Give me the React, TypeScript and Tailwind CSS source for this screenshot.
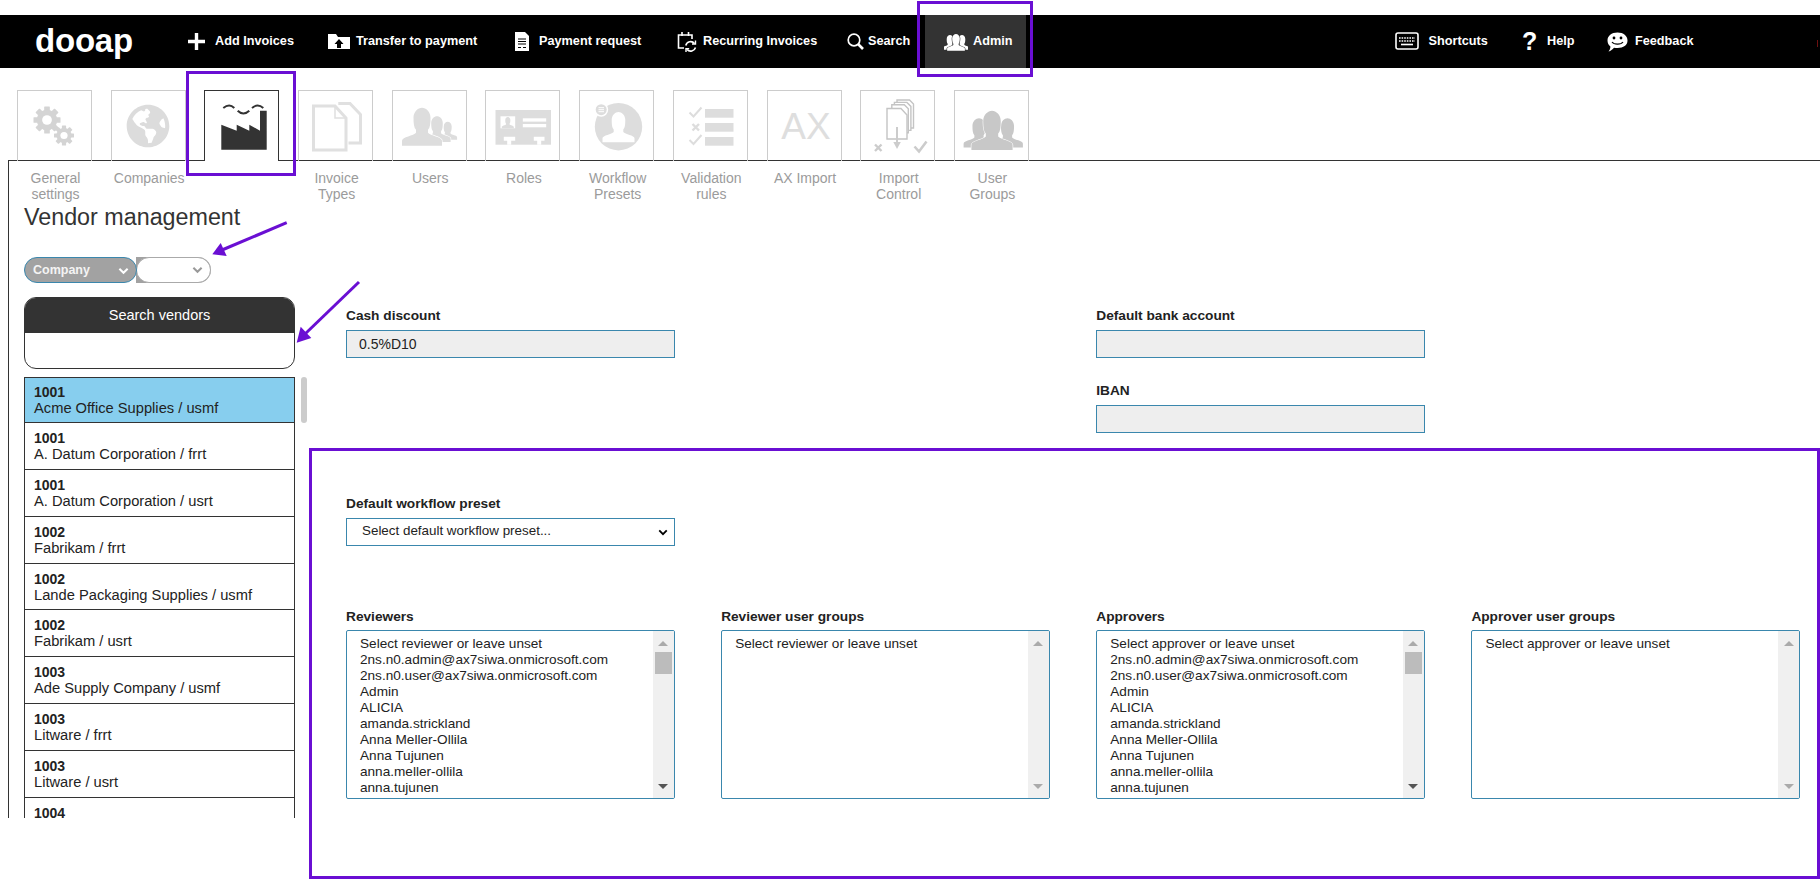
import React from 'react';
import { FaGlobeAmericas } from 'react-icons/fa';

const purple = '#6a0fd3';

const vendors = [
  ['1001', 'Acme Office Supplies / usmf'],
  ['1001', 'A. Datum Corporation / frrt'],
  ['1001', 'A. Datum Corporation / usrt'],
  ['1002', 'Fabrikam / frrt'],
  ['1002', 'Lande Packaging Supplies / usmf'],
  ['1002', 'Fabrikam / usrt'],
  ['1003', 'Ade Supply Company / usmf'],
  ['1003', 'Litware / frrt'],
  ['1003', 'Litware / usrt'],
  ['1004', ''],
];

const users = (first: string) => [
  first,
  '2ns.n0.admin@ax7siwa.onmicrosoft.com',
  '2ns.n0.user@ax7siwa.onmicrosoft.com',
  'Admin',
  'ALICIA',
  'amanda.strickland',
  'Anna Meller-Ollila',
  'Anna Tujunen',
  'anna.meller-ollila',
  'anna.tujunen',
];

const PERSON =
  'M-20 0V-5C-20 -9 -8 -10 -6 -13V-16C-8 -18 -8.5 -22 -8.5 -28C-8.5 -34 -4 -38 0 -38C4 -38 8.5 -34 8.5 -28C8.5 -22 8 -18 6 -16V-13C8 -10 20 -9 20 -5V0Z';

function Person({ x, y, s, fill = '#ddd', outline = '#fff' }: { x: number; y: number; s: number; fill?: string; outline?: string }) {
  return (
    <path
      d={PERSON}
      transform={`translate(${x} ${y}) scale(${s})`}
      fill={fill}
      stroke={outline}
      strokeWidth={1.2 / s}
      paintOrder="stroke"
    />
  );
}

function Gear({ x, y, r, fill = '#d4d4d4' }: { x: number; y: number; r: number; fill?: string }) {
  const angles = [0, 45, 90, 135, 180, 225, 270, 315];
  const w = r * 0.42;
  return (
    <g transform={`translate(${x} ${y})`}>
      {angles.map((a) => (
        <rect key={a} x={-w / 2} y={-r} width={w} height={r} rx={0.6} fill={fill} transform={`rotate(${a})`} />
      ))}
      <circle r={r * 0.76} fill={fill} />
      <circle r={r * 0.36} fill="#fff" />
    </g>
  );
}

function TileSvg({ children }: { children: React.ReactNode }) {
  return (
    <svg viewBox="0 0 73 70" className="w-[73px] h-[70px] block">
      {children}
    </svg>
  );
}

const tiles: { label: string; active?: boolean; icon: React.ReactNode }[] = [
  {
    label: 'General settings',
    icon: (
      <TileSvg>
        <Gear x={29} y={29} r={13.5} />
        <Gear x={46} y={44.5} r={10} />
      </TileSvg>
    ),
  },
  {
    label: 'Companies',
    icon: (
      <div className="flex h-[70px] items-center justify-center">
        <FaGlobeAmericas size={44} color="#dcdcdc" />
      </div>
    ),
  },
  {
    label: '',
    active: true,
    icon: (
      <TileSvg>
        <path
          d="M16.3 33.7L31.7 39.7V33.7L44.3 39.7V33.7L55 39.7V19.7H61.7V58.7H16.3Z"
          fill="#333"
        />
        <path
          d="M18.3 17Q24.3 12 29.3 17M32.7 19.7Q38.3 25.3 44.3 19.7M47 17Q52.7 12 58.3 17"
          fill="none"
          stroke="#333"
          strokeWidth="2"
        />
      </TileSvg>
    ),
  },
  {
    label: 'Invoice Types',
    icon: (
      <TileSvg>
        <g fill="none" stroke="#e0e0e0" strokeWidth="3">
          <path d="M39.3 12.5H51L61.5 23.5V52H49.5" />
          <path d="M14.5 15H36L47 27V59H14.5Z" />
          <path d="M36 15V27H47" strokeWidth="1.5" />
        </g>
      </TileSvg>
    ),
  },
  {
    label: 'Users',
    icon: (
      <TileSvg>
        <Person x={54.7} y={48.7} s={0.47} />
        <Person x={44} y={51} s={0.68} />
        <Person x={29} y={54.7} s={1} />
      </TileSvg>
    ),
  },
  {
    label: 'Roles',
    icon: (
      <TileSvg>
        <rect x="9.5" y="19" width="55.5" height="34.7" fill="#ddd" />
        <rect x="14.5" y="25.3" width="14.7" height="12" fill="#fff" />
        <Person x={21.8} y={37.3} s={0.3} outline="none" />
        <rect x="36.8" y="27.3" width="23.4" height="3.3" fill="#fff" />
        <rect x="36.8" y="33" width="23.4" height="3.3" fill="#fff" />
        <path d="M17.8 45.7H29.2V49.7H25.2V53.7H21.2V49.7H17.8ZM47.8 45.7H58.5V49.7H55.2V53.7H51.2V49.7H47.8Z" fill="#fff" />
      </TileSvg>
    ),
  },
  {
    label: 'Workflow Presets',
    icon: (
      <TileSvg>
        <circle cx="38.5" cy="35.7" r="23.7" fill="#ddd" />
        <Person x={38.5} y={51.3} s={0.8} fill="#fff" outline="none" />
        <circle cx="21.2" cy="18.7" r="7" fill="#fff" />
        <circle cx="21.2" cy="18.7" r="5.5" fill="#ddd" />
        <path d="M18.5 16.7H24M18.5 18.7H24M18.5 20.7H24" stroke="#fff" strokeWidth="1" />
      </TileSvg>
    ),
  },
  {
    label: 'Validation rules',
    icon: (
      <TileSvg>
        <rect x="31" y="18" width="28.5" height="8.7" fill="#ddd" />
        <rect x="31" y="32" width="28.5" height="8.7" fill="#ddd" />
        <rect x="31" y="46" width="28.5" height="8.7" fill="#ddd" />
        <g fill="none" stroke="#ddd" strokeWidth="2">
          <path d="M15.5 21.5L19.5 25.5L27.5 16.5M15.5 49L19.5 53L27.5 44" />
          <path d="M18.5 33L25 39.5M25 33L18.5 39.5" strokeWidth="2.4" />
        </g>
      </TileSvg>
    ),
  },
  {
    label: 'AX Import',
    icon: (
      <div className="flex h-[71px] items-center justify-center pl-[4px] text-[37px] leading-none text-[#dedede]">AX</div>
    ),
  },
  {
    label: 'Import Control',
    icon: (
      <TileSvg>
        <g fill="#fff" stroke="#c4c4c4" strokeWidth="1.4">
          <path d="M36 9H48.5L52.5 13V37H36Z" />
          <path d="M33.4 11.4H45.9L49.9 15.4V39.4H33.4Z" />
          <path d="M30.8 13.8H43.3L47.3 17.8V41.8H30.8Z" />
          <path d="M26 17.5H40L46 24V48H26Z" />
        </g>
        <path d="M36 36V53" stroke="#ccc" strokeWidth="2" />
        <path d="M32.3 51H39.8L36 58Z" fill="#ccc" />
        <path d="M14 53.5L20.5 60M20.5 53.5L14 60" stroke="#ccc" strokeWidth="2.4" />
        <path d="M53.5 55.5L58 60.5L65.5 50.5" fill="none" stroke="#ccc" strokeWidth="2.6" />
      </TileSvg>
    ),
  },
  {
    label: 'User Groups',
    icon: (
      <TileSvg>
        <Person x={24} y={56.5} s={0.77} fill="#c8c8c8" />
        <Person x={52.5} y={56.5} s={0.77} fill="#c8c8c8" />
        <Person x={37} y={59} s={1.03} fill="#c8c8c8" />
      </TileSvg>
    ),
  },
];

function Chevron({ className }: { className: string }) {
  return (
    <svg viewBox="0 0 12 8" className={className} fill="none" stroke="currentColor" strokeWidth="2.2">
      <path d="M1.5 1.5L6 6L10.5 1.5" />
    </svg>
  );
}

function ListBox({ rows, thumb }: { rows: string[]; thumb?: boolean }) {
  return (
    <div className="flex h-[169px] overflow-hidden rounded-[2px] border border-[#3a87ad] bg-white">
      <div className="flex-1 pl-[13px] pt-[5px] text-[13.6px] leading-[16px] text-[#222]">
        {rows.map((r) => (
          <div key={r}>{r}</div>
        ))}
      </div>
      <div className="flex w-[21px] flex-col items-center bg-[#f0f0f0] pt-[10px] pb-[9px]">
        <div className="h-0 w-0 border-x-[5px] border-b-[5px] border-x-transparent border-b-[#aaa]" />
        {thumb && <div className="mt-[6px] h-[22px] w-[17px] bg-[#bcbcbc]" />}
        <div
          className={
            thumb
              ? 'mt-auto h-0 w-0 border-x-[5px] border-t-[5px] border-x-transparent border-t-[#555]'
              : 'mt-auto h-0 w-0 border-x-[5px] border-t-[5px] border-x-transparent border-t-[#aaa]'
          }
        />
      </div>
    </div>
  );
}

function Label({ children, className = '' }: { children: React.ReactNode; className?: string }) {
  return <div className={`text-[13.7px] font-bold leading-[16px] text-[#222] ${className}`}>{children}</div>;
}

function ReadField({ value = '' }: { value?: string }) {
  return (
    <input
      readOnly
      value={value}
      className="mt-[6px] block h-[28px] w-full border border-[#3a87ad] bg-[#eee] pl-[12px] text-[14px] text-[#222] outline-none"
    />
  );
}

export default function App() {
  return (
    <div className="relative h-[880px] w-[1820px] overflow-hidden bg-white font-['Liberation_Sans',Arial,sans-serif]">
      {/* top nav */}
      <nav className="mt-[15px] flex h-[53px] items-center bg-black text-[12.7px] font-bold text-white">
        <div className="w-[188px] pl-[35px] pb-[3px] text-[33px] leading-none tracking-[-0.2px]">dooap</div>
        <a className="flex w-[140px] items-center">
          <span className="w-[27px]">
            <svg viewBox="0 0 17 17" className="h-[17px] w-[17px]" fill="#fff">
              <path d="M6.8 0H10.2V6.8H17V10.2H10.2V17H6.8V10.2H0V6.8H6.8Z" />
            </svg>
          </span>
          Add Invoices
        </a>
        <a className="flex w-[187px] items-center">
          <span className="w-[28px]">
            <svg viewBox="0 0 22 15" className="h-[15px] w-[22px]">
              <path d="M0 0H8L10 3H22V15H0Z" fill="#fff" />
              <path d="M11 5L15.5 10H13V14H9V10H6.5Z" fill="#000" />
            </svg>
          </span>
          Transfer to payment
        </a>
        <a className="flex w-[162px] items-center">
          <span className="w-[24px]">
            <svg viewBox="0 0 14 19" className="h-[19px] w-[14px]">
              <path d="M0 0H10L14 4V19H0Z" fill="#fff" />
              <path d="M3 7H11M3 9.5H11M3 12H11M3 15.5H6M8 15.5H11" stroke="#000" strokeWidth="1" />
            </svg>
          </span>
          Payment request
        </a>
        <a className="flex w-[170px] items-center">
          <span className="w-[26px]">
            <svg viewBox="0 0 20 22" className="h-[22px] w-[20px]" fill="none" stroke="#fff" strokeWidth="1.6">
              <path d="M7 17H1.5V4H15V8" />
              <path d="M5 1V5M11.5 1V5" />
              <path d="M8.8 14.5A5 5 0 0 1 17.5 12.5M18.5 16.5A5 5 0 0 1 10 18.5" />
              <path d="M18.5 9.5V13H15M9 21V17.8H12.2" strokeWidth="1.4" />
            </svg>
          </span>
          Recurring Invoices
        </a>
        <a className="flex w-[78px] items-center">
          <span className="w-[21px]">
            <svg viewBox="0 0 17 17" className="h-[17px] w-[17px]" fill="none" stroke="#fff">
              <circle cx="7" cy="7" r="5.8" strokeWidth="1.7" />
              <path d="M11 11L16 16" strokeWidth="2.6" />
            </svg>
          </span>
          Search
        </a>
        <a className="flex h-full w-[101px] items-center bg-[#333] pl-[19px]">
          <span className="w-[29px]">
            <svg viewBox="-13 -19 26 19" className="h-[18px] w-[24px]">
              <Person x={-6.5} y={-1} s={0.42} fill="#fff" outline="#333" />
              <Person x={6.5} y={-1} s={0.42} fill="#fff" outline="#333" />
              <Person x={0} y={0} s={0.48} fill="#fff" outline="#333" />
            </svg>
          </span>
          Admin
        </a>
        <a className="ml-[369px] flex w-[127px] items-center">
          <span className="w-[33.5px]">
            <svg viewBox="0 0 24 18" className="h-[18px] w-[24px]" fill="none" stroke="#fff">
              <rect x="1" y="1" width="22" height="16" rx="2" strokeWidth="1.6" />
              <path d="M4 6H20M4 9H20" strokeWidth="1.6" strokeDasharray="1.6 1" />
              <path d="M6 12.5H18" strokeWidth="1.6" />
            </svg>
          </span>
          Shortcuts
        </a>
        <a className="flex w-[85px] items-center">
          <span className="w-[25px] text-[25px] leading-none">?</span>
          Help
        </a>
        <a className="flex items-center">
          <span className="w-[28px]">
            <svg viewBox="0 0 21 20" className="h-[20px] w-[21px]">
              <path d="M10.5 0.5C16.5 0.5 20.5 3.8 20.5 8.5C20.5 13.2 16.5 16 10.5 16C9.5 16 8 16 7 15.8C5.5 17.5 3.8 19 1.5 19.5C3 17.8 3.4 16 3.4 14.5C1.6 13 .5 11 .5 8.5C.5 3.8 4.5 .5 10.5 .5Z" fill="#fff" />
              <circle cx="7" cy="6" r="1.4" fill="#000" />
              <circle cx="14" cy="6" r="1.4" fill="#000" />
              <path d="M5 10C7 12.8 14 12.8 16 10" fill="none" stroke="#000" strokeWidth="1.2" />
            </svg>
          </span>
          Feedback
        </a>
        <div className="ml-auto mr-[2px] mt-[4px] h-[7px] w-px bg-[#6b1010]" />
      </nav>

      {/* admin tiles */}
      <div className="ml-[8px] mt-[22px] flex h-[70px] items-start gap-[18.7px] pl-[9px]">
        {tiles.map((t, i) => (
          <div
            key={i}
            className={
              t.active
                ? 'relative z-10 h-[71px] w-[75px] shrink-0 border border-b-0 border-[#333] bg-white'
                : 'h-[71px] w-[75px] shrink-0 border border-b-0 border-[#ccc]'
            }
          >
            {t.icon}
          </div>
        ))}
      </div>

      <div className="ml-[8px] flex h-[658px] flex-col border-l border-t border-[#333]">
        <div className="flex gap-[18.7px] pl-[9px] pt-[9px]">
          {tiles.map((t, i) => (
            <div key={i} className="w-[75px] shrink-0 text-center text-[14px] leading-[16px] text-[#9b9b9b]">
              {t.label}
            </div>
          ))}
        </div>

        <div className="flex min-h-0 flex-1 pl-[15px]">
          {/* vendor sidebar */}
          <div className="flex w-[271px] shrink-0 flex-col">
            <h1 className="text-[23.3px] font-normal leading-[30px] text-[#333]">Vendor management</h1>
            <div className="mt-[25px] flex h-[26px] w-[187px]">
              <div className="relative z-10 flex w-[113px] items-center rounded-full border border-[#3a87ad] bg-[#a2a2a2] pl-[8px] text-[12.5px] font-bold text-[#f4f4f4]">
                Company
                <Chevron className="absolute right-[7px] top-[9px] h-[8px] w-[11px] text-white" />
              </div>
              <div className="-ml-px w-[75px] rounded-r-full bg-[#a2a2a2]">
                <div className="relative h-full rounded-full border border-[#aaa] bg-white">
                  <Chevron className="absolute right-[7px] top-[8px] h-[8px] w-[11px] text-[#999]" />
                </div>
              </div>
            </div>
            <div className="mt-[14px] h-[72px] overflow-hidden rounded-[12px] border border-[#333]">
              <div className="flex h-[35px] items-center justify-center bg-[#333] text-[14.5px] text-white">Search vendors</div>
            </div>
            <div className="mt-[8px] min-h-0 flex-1 overflow-hidden border-x border-t border-[#333]">
              {vendors.map(([code, name], i) => (
                <div
                  key={i}
                  className={
                    i === 0
                      ? 'h-[45px] border-b border-[#333] bg-[#87ceee] pl-[9px] pt-[6px] text-[14.7px] leading-[16px] text-[#222]'
                      : 'h-[46.85px] border-b border-[#333] pl-[9px] pt-[7px] text-[14.7px] leading-[16px] text-[#222]'
                  }
                >
                  <div className="text-[14px] font-bold">{code}</div>
                  <div>{name}</div>
                </div>
              ))}
            </div>
          </div>

          <div className="ml-[6px] mt-[175px] h-[46px] w-[6px] shrink-0 rounded-[3px] bg-[#ccc]" />

          {/* vendor form */}
          <div className="ml-[39px] w-[1454px] pt-[106px]">
            <div className="grid grid-cols-4 gap-x-[46.5px]">
              <div>
                <Label>Cash discount</Label>
                <ReadField value="0.5%D10" />
              </div>
              <div />
              <div>
                <Label>Default bank account</Label>
                <ReadField />
                <Label className="mt-[25px]">IBAN</Label>
                <ReadField />
              </div>
            </div>

            <div className="mt-[63px] w-[328.6px]">
              <Label>Default workflow preset</Label>
              <div className="relative mt-[6px] flex h-[28px] items-center border border-[#3a87ad] pb-[1px] pl-[15px] text-[13.4px] text-[#222]">
                Select default workflow preset...
                <Chevron className="absolute right-[6px] top-[10px] h-[7px] w-[10px] text-black" />
              </div>
            </div>

            <div className="mt-[63px] grid grid-cols-4 gap-x-[46.5px]">
              <div>
                <Label className="mb-[5px]">Reviewers</Label>
                <ListBox rows={users('Select reviewer or leave unset')} thumb />
              </div>
              <div>
                <Label className="mb-[5px]">Reviewer user groups</Label>
                <ListBox rows={['Select reviewer or leave unset']} />
              </div>
              <div>
                <Label className="mb-[5px]">Approvers</Label>
                <ListBox rows={users('Select approver or leave unset')} thumb />
              </div>
              <div>
                <Label className="mb-[5px]">Approver user groups</Label>
                <ListBox rows={['Select approver or leave unset']} />
              </div>
            </div>
          </div>
        </div>
      </div>

      {/* purple annotations drawn over the screenshot */}
      <div className="absolute left-[917px] top-[1px] h-[76px] w-[116px] border-[3px] border-[#6a0fd3]" />
      <div className="absolute left-[186px] top-[71px] h-[105px] w-[110px] border-[3px] border-[#6a0fd3] z-20" />
      <div className="absolute left-[309px] top-[448px] h-[431px] w-[1511px] border-[3px] border-[#6a0fd3]" />
      <svg className="pointer-events-none absolute left-0 top-0 h-[880px] w-[1820px]" viewBox="0 0 1820 880">
        <path d="M286.7 222.7L222 250" stroke={purple} strokeWidth="3" />
        <path d="M212.3 254.3L226.7 256L220.7 243Z" fill={purple} />
        <path d="M359 282L305 334" stroke={purple} strokeWidth="3" />
        <path d="M296.7 342.7L311.3 338L300.7 326.7Z" fill={purple} />
      </svg>
    </div>
  );
}
